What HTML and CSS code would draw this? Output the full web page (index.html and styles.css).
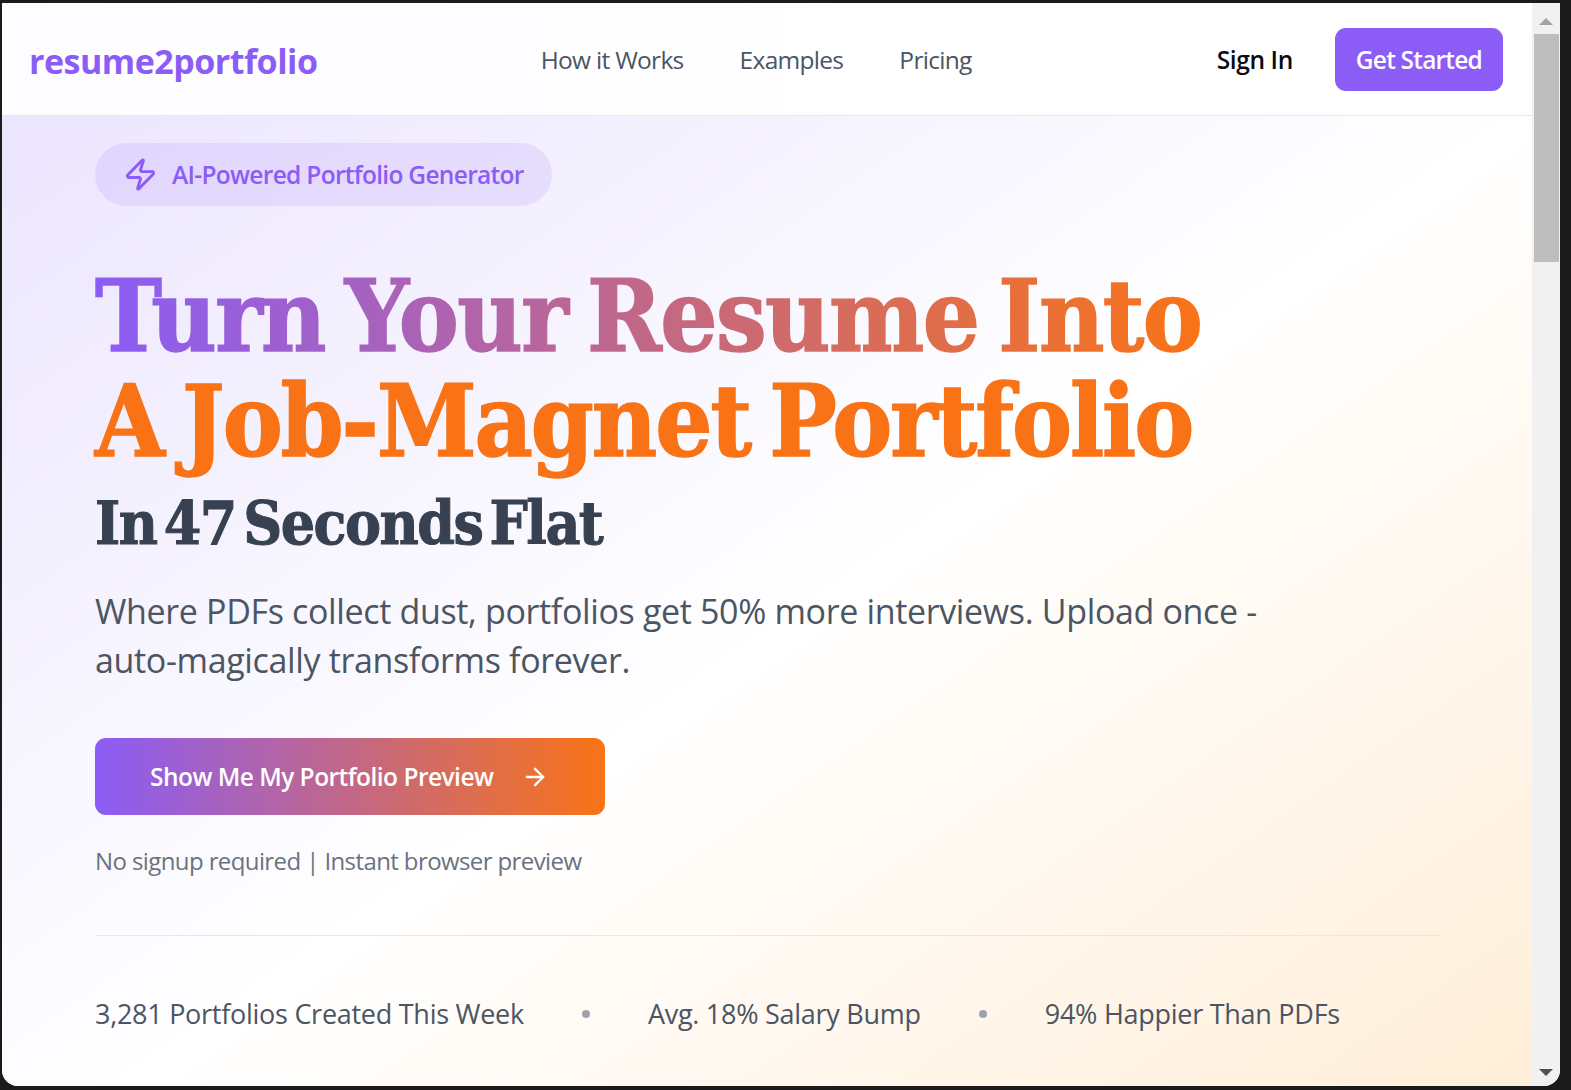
FILE: index.html
```html
<!DOCTYPE html>
<html lang="en">
<head>
  <meta charset="UTF-8" />
  <meta name="viewport" content="width=device-width, initial-scale=1.0"/>
  <title>resume2portfolio</title>
  <link rel="stylesheet" href="styles.css">
</head>
<body>
  <div class="window">
    <div class="page">
      <header class="topbar">
        <a class="logo">resume2portfolio</a>
        <nav class="nav">
          <a>How it Works</a>
          <a>Examples</a>
          <a>Pricing</a>
        </nav>
        <div class="actions">
          <a class="sign-in">Sign In</a>
          <a class="get-started">Get Started</a>
        </div>
      </header>

      <main class="hero">
        <div class="badge">
          <svg class="badge-icon" viewBox="0 0 24 24" fill="none" stroke="currentColor" stroke-width="2" stroke-linecap="round" stroke-linejoin="round">
            <path d="M4 14a1 1 0 0 1-.78-1.63l9.9-10.2a.5.5 0 0 1 .86.46l-1.92 6.02A1 1 0 0 0 13 10h7a1 1 0 0 1 .78 1.63l-9.9 10.2a.5.5 0 0 1-.86-.46l1.92-6.02A1 1 0 0 0 11 14z"/>
          </svg>
          <span>AI-Powered Portfolio Generator</span>
        </div>

        <h1 class="headline">
          <span class="line-gradient">Turn Your Resume Into</span>
          <span class="line-orange">A Job-Magnet Portfolio</span>
        </h1>
        <h2 class="subhead">In 47 Seconds Flat</h2>
        <p class="lead">Where PDFs collect dust, portfolios get 50% more interviews. Upload once - auto-magically transforms forever.</p>

        <a class="cta">
          <span>Show Me My Portfolio Preview</span>
          <svg class="cta-icon" viewBox="0 0 24 24" fill="none" stroke="currentColor" stroke-width="2" stroke-linecap="round" stroke-linejoin="round">
            <path d="M5 12h14"/>
            <path d="m12 5 7 7-7 7"/>
          </svg>
        </a>
        <p class="note">No signup required | Instant browser preview</p>

        <div class="stats">
          <span>3,281 Portfolios Created This Week</span>
          <i class="dot"></i>
          <span>Avg. 18% Salary Bump</span>
          <i class="dot"></i>
          <span>94% Happier Than PDFs</span>
        </div>
      </main>
    </div>

    <div class="scrollbar">
      <div class="arrow-up"></div>
      <div class="thumb"></div>
      <div class="track"></div>
      <div class="arrow-down"></div>
    </div>
  </div>
</body>
</html>
```

FILE: styles.css
```css
html, body {
  height: 100%;
}

body {
  margin: 0;
  padding: 3px 11px 4px 2px;
  box-sizing: border-box;
  background: #1b1b1b;
  font-family: "Open Sans", "Noto Sans", sans-serif;
  overflow: hidden;
}

a {
  text-decoration: none;
}

.window {
  display: flex;
  height: 100%;
  overflow: hidden;
  border-radius: 0 0 16px 16px;
  background: #fff;
}

.page {
  flex: 1;
  min-width: 0;
  display: flex;
  flex-direction: column;
}

.topbar {
  height: 112px;
  flex: none;
  display: flex;
  align-items: center;
  justify-content: space-between;
  padding: 0 29px 0 27px;
  background: linear-gradient(90deg, #fdfcff, #ffffff 60%);
  border-bottom: 1px solid #e5e7eb;
}

.logo {
  font-size: 34px;
  font-weight: 700;
  letter-spacing: -0.5px;
  color: #8b5cf6;
  padding-top: 4px;
}

.nav {
  display: flex;
  gap: 56px;
  margin-right: 22px;
  font-size: 24.5px;
  color: #4b5563;
  letter-spacing: -0.7px;
}

.actions {
  display: flex;
  align-items: center;
  gap: 42px;
}

.sign-in {
  font-size: 24.5px;
  font-weight: 600;
  letter-spacing: -0.4px;
  color: #0b0b12;
}

.get-started {
  display: block;
  padding: 15px 21px;
  border-radius: 11px;
  background: #8b5cf6;
  color: #fff;
  font-size: 24.5px;
  font-weight: 600;
  letter-spacing: -0.8px;
}

.hero {
  flex: 1;
  padding: 27px 92px 0 93px;
  background: linear-gradient(to bottom right, #ebe5fe 0%, #ffffff 50%, #ffedd5 100%) no-repeat;
  background-size: 100% 1060px;
}

.badge {
  display: inline-flex;
  align-items: center;
  gap: 14px;
  height: 63px;
  padding: 0 28px;
  border-radius: 32px;
  background: rgba(139, 92, 246, 0.12);
  color: #8b5cf6;
  font-size: 24.5px;
  font-weight: 600;
  letter-spacing: -0.7px;
}

.badge-icon {
  width: 35px;
  height: 35px;
}

.headline {
  margin: 58px 0 0;
  font-family: "DejaVu Serif Condensed", "DejaVu Serif", serif;
  font-size: 100px;
  font-weight: 700;
  line-height: 105px;
  word-spacing: -10px;
}

.line-gradient {
  display: block;
  width: fit-content;
  letter-spacing: -1.5px;
  background: linear-gradient(90deg, #8b5cf6, #f97316);
  -webkit-background-clip: text;
  background-clip: text;
  color: transparent;
  -webkit-text-stroke: 1.5px transparent;
}

.line-orange {
  display: block;
  letter-spacing: -2px;
  color: #f97316;
  -webkit-text-stroke: 1.5px #f97316;
}

.subhead {
  margin: 14px 0 0;
  font-family: "DejaVu Serif Condensed", "DejaVu Serif", serif;
  font-size: 60px;
  font-weight: 700;
  line-height: 70px;
  letter-spacing: -1.5px;
  word-spacing: -10px;
  color: #374151;
  -webkit-text-stroke: 1px #374151;
}

.lead {
  margin: 29px 0 0;
  max-width: 1200px;
  font-size: 34px;
  line-height: 49px;
  letter-spacing: -0.35px;
  color: #4b5563;
}

.cta {
  display: flex;
  width: fit-content;
  align-items: center;
  gap: 28px;
  height: 77px;
  margin-top: 53px;
  padding: 0 56px 0 55px;
  border-radius: 11px;
  background: linear-gradient(90deg, #8b5cf6, #f97316);
  color: #fff;
  font-size: 24.5px;
  font-weight: 600;
  letter-spacing: -0.53px;
}

.cta-icon {
  width: 28px;
  height: 28px;
}

.note {
  margin: 28px 0 0;
  font-size: 24px;
  line-height: 35px;
  letter-spacing: -0.6px;
  color: #6b7280;
}

.stats {
  display: flex;
  align-items: center;
  gap: 58px;
  margin-top: 57px;
  padding-top: 58px;
  border-top: 1px solid #e5e7eb;
  font-size: 27px;
  line-height: 40px;
  letter-spacing: -0.27px;
  color: #4b5563;
}

.dot {
  width: 8px;
  height: 8px;
  border-radius: 50%;
  background: #9ca3af;
}

.scrollbar {
  flex: none;
  width: 28px;
  display: flex;
  flex-direction: column;
  align-items: center;
  background: #f1f1f1;
}

.arrow-up {
  flex: none;
  margin: 15px 0 9px;
  border-left: 7px solid transparent;
  border-right: 7px solid transparent;
  border-bottom: 7px solid #a3a3a3;
}

.thumb {
  flex: none;
  width: 25px;
  height: 228px;
  background: #bebebe;
}

.track {
  flex: 1;
}

.arrow-down {
  flex: none;
  margin-bottom: 10px;
  border-left: 7px solid transparent;
  border-right: 7px solid transparent;
  border-top: 7px solid #505050;
}
```
